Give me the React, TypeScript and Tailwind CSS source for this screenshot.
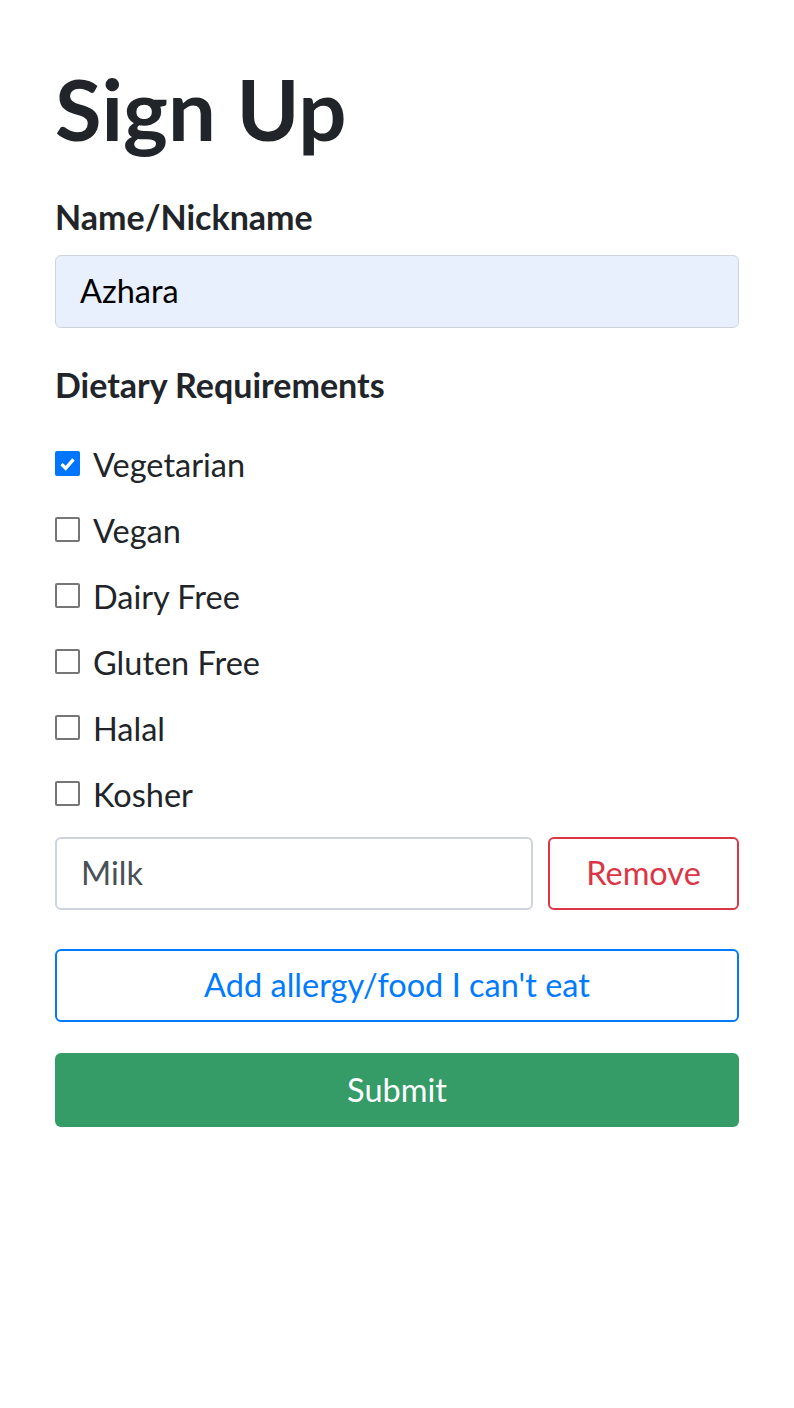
import React from "react";

const items = ["Vegetarian", "Vegan", "Dairy Free", "Gluten Free", "Halal", "Kosher"];

export default function App() {
  return (
    <div className="min-h-[1408px] bg-white px-[55px] pt-[57px] text-[#212529]" style={{ fontFamily: "Lato, 'Noto Sans', sans-serif" }}>
      <h1 className="text-[85px] font-bold leading-[1.2] mb-[32px]">Sign Up</h1>
      <div className="text-[34px] font-bold leading-[1.5] mb-[13px]">Name/Nickname</div>
      <div className="h-[73px] rounded-[6px] border border-[#ced4da] bg-[#e8f0fe] px-[24px] flex items-center text-[32.5px] text-black">Azhara</div>
      <div className="text-[34px] font-bold leading-[1.5] mt-[31px] mb-[20px]">Dietary Requirements</div>
      <div className="flex flex-col">
        {items.map((it, i) => (
          <div key={it} className="h-[66px] flex items-center gap-[13px] text-[32.5px]">
            {i === 0 ? (
              <div className="w-[25px] h-[25px] bg-[#0075ff] rounded-[2px] flex items-center justify-center">
                <svg width="19" height="19" viewBox="0 0 16 16"><path d="M3 8.5 L6.5 12 L13 4.5" stroke="white" strokeWidth="2.8" fill="none" /></svg>
              </div>
            ) : (
              <div className="w-[25px] h-[25px] border-2 border-[#767676] rounded-[2px] bg-white" />
            )}
            <span className="pt-[4px]">{it}</span>
          </div>
        ))}
      </div>
      <div className="flex gap-[15px] mt-[11px]">
        <div className="flex-1 h-[73px] rounded-[6px] border-2 border-[#ced4da] px-[24px] flex items-center text-[32.5px] text-[#495057]">Milk</div>
        <button className="w-[191px] h-[73px] rounded-[6px] border-2 border-[#dc3545] text-[#dc3545] text-[32.5px]">Remove</button>
      </div>
      <button className="mt-[39px] w-full h-[73px] rounded-[6px] border-2 border-[#007bff] text-[#007bff] text-[32.5px]">Add allergy/food I can't eat</button>
      <button className="mt-[31px] w-full h-[74px] rounded-[6px] bg-[#359b67] text-white text-[32.5px]">Submit</button>
    </div>
  );
}
